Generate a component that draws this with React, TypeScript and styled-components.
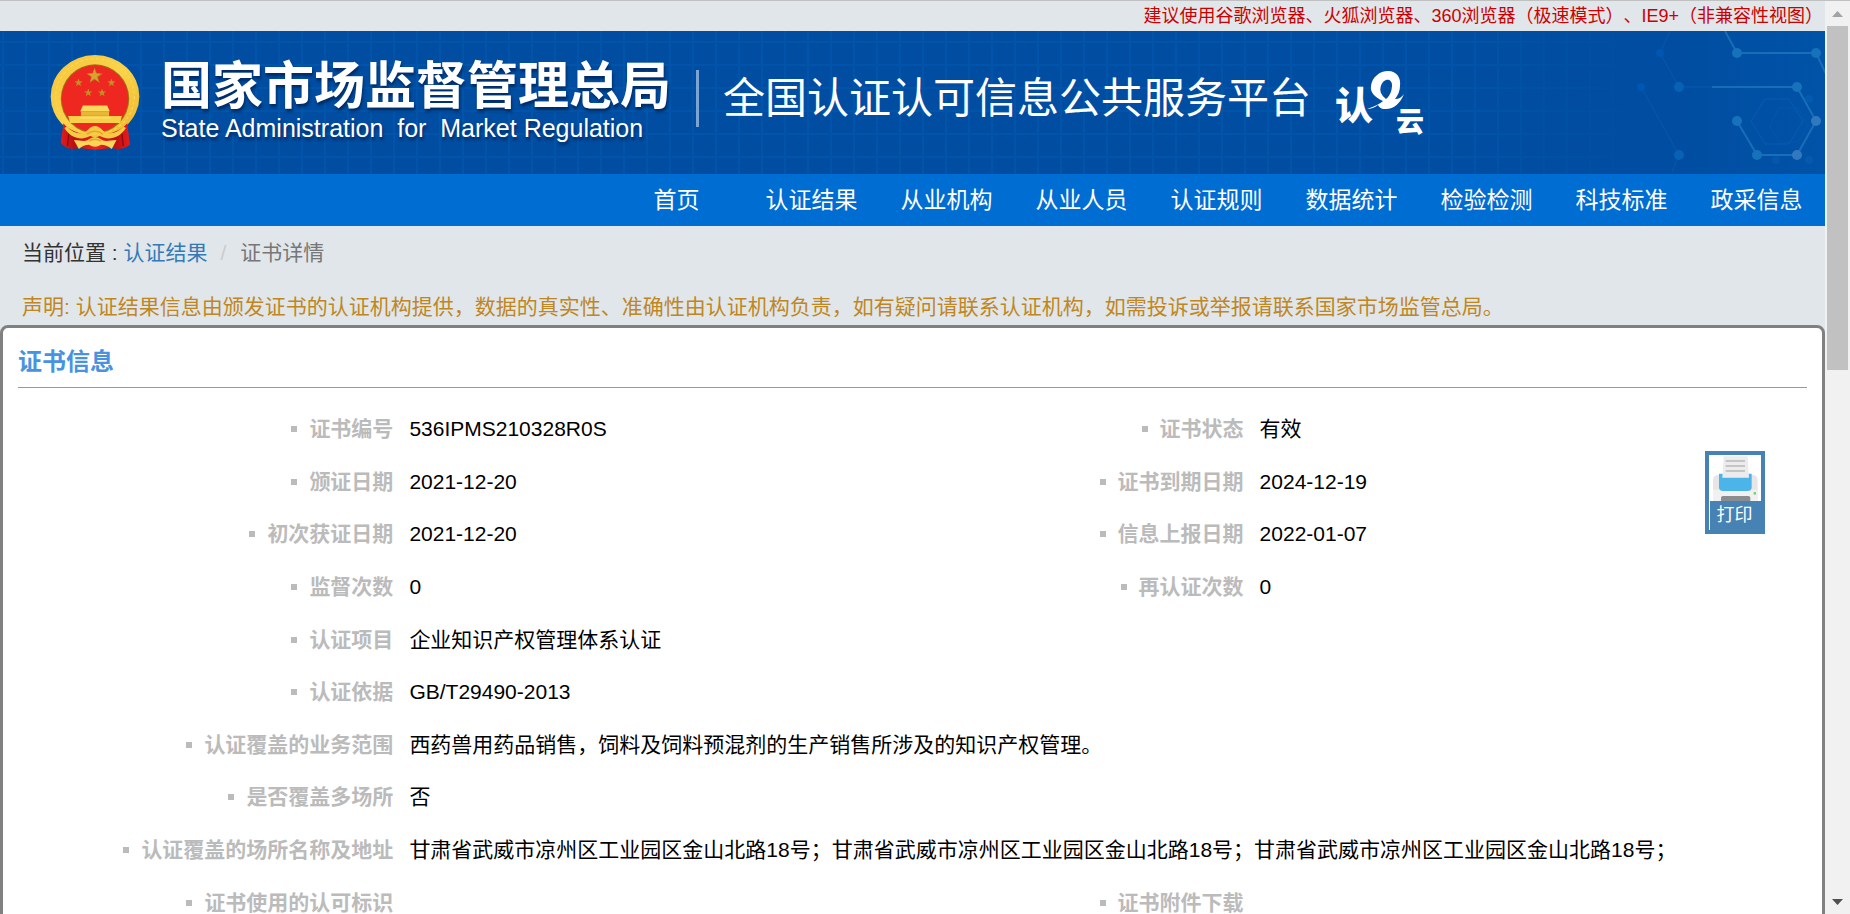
import React from "react";
import styled, { createGlobalStyle } from "styled-components";

const GlobalStyle = createGlobalStyle`
  *, *::before, *::after { box-sizing: border-box; }
  body {
    margin: 0;
    background: #fff;
    color: #333;
    font-family: "Liberation Sans", Arial, "Noto Sans CJK SC", sans-serif;
    font-size: 21px;
    line-height: 30px;
    text-spacing-trim: space-all;
  }
  a { color: inherit; text-decoration: none; }
`;

const Frame = styled.div`
  display: flex;
  height: 100vh;
  overflow: hidden;
  border-top: 1px solid #c0c0c0;
`;

const Page = styled.div`
  flex: 1;
  min-width: 0;
  background: #e1e6ea;
`;

const BrowserNotice = styled.p`
  margin: 0;
  padding-right: 2px;
  color: #cc0000;
  font-size: 18px;
  line-height: 30px;
  text-align: right;
`;

const Banner = styled.header`
  position: relative;
  display: flex;
  align-items: center;
  height: 143px;
  padding-left: 50px;
  white-space: nowrap;
  color: #fff;
  background:
    repeating-linear-gradient(to right, transparent 0 2px, #0055aa 2px 4px, transparent 4px 23px),
    repeating-linear-gradient(to bottom, transparent 0 10px, #0055aa 10px 12px, transparent 12px 23px),
    #004da1;
`;

const Molecules = styled.svg`
  position: absolute;
  top: 0;
  right: 0;
`;

const Emblem = styled.svg`
  flex: none;
  width: 90px;
  height: 95px;
`;

const Agency = styled.div`
  width: 514px;
  margin-left: 21px;
  text-shadow: 1px 3px 3px rgba(0, 20, 60, 0.6);
`;

const AgencyName = styled.div`
  font-size: 51px;
  font-weight: 700;
  line-height: 50px;
`;

const AgencyEnglish = styled.div`
  font-size: 25px;
  line-height: 32px;
  white-space: pre;
`;

const Divider = styled.span`
  width: 3px;
  height: 57px;
  margin: 0 24px 8px 21px;
  background: #7ba4d2;
`;

const PlatformName = styled.h1`
  margin: 0 24px 8px 0;
  font-size: 42px;
  font-weight: 400;
  line-height: 56px;
`;

const CloudMark = styled.svg`
  position: relative;
  flex: none;
  overflow: visible;
  font-family: "Noto Sans CJK SC", sans-serif;
  font-weight: 900;
  fill: #fff;
`;

const NavBar = styled.nav`
  display: flex;
  justify-content: flex-end;
  height: 52px;
  padding-right: 1px;
  background: #006dd2;
`;

const NavLink = styled.a`
  width: 135px;
  color: #fff;
  font-size: 23px;
  line-height: 52px;
  text-align: center;
`;

const Breadcrumb = styled.ol`
  display: flex;
  margin: 0;
  padding: 12px 22px;
  list-style: none;
`;

const Crumb = styled.li<{ $current?: boolean }>`
  color: ${(p) => (p.$current ? "#777" : "#333")};
  white-space: pre;

  a { color: #337ab7; }

  ${(p) => p.$current && `&::before { content: "/"; padding: 0 14px 0 13px; color: #ccc; }`}
`;

const Statement = styled.p`
  margin: 0;
  padding: 12px 22px 3px;
  color: #bf8622;
`;

const Panel = styled.section`
  padding: 19px 15px 40px;
  background: #fff;
  border: 3px solid #808080;
  border-radius: 8px;
`;

const PanelTitle = styled.h2`
  margin: 0 0 15px;
  padding-bottom: 10px;
  border-bottom: 1px solid #999;
  color: #4793e2;
  font-size: 24px;
  line-height: 30px;
`;

const PanelBody = styled.div`
  display: flex;
  align-items: flex-start;
`;

const Details = styled.table`
  flex: 1;
  height: 526px;
  table-layout: fixed;
  border-collapse: collapse;
  color: #000;

  .label { width: 23.2%; }
  .value { width: 27.2%; }
`;

const Label = styled.th`
  padding: 0 16px 0 0;
  color: #bbb;
  font-weight: 700;
  text-align: right;
  white-space: nowrap;

  &::before {
    content: "";
    display: inline-block;
    width: 6px;
    height: 6px;
    margin-right: 12px;
    vertical-align: 4px;
    background: #bbb;
  }
`;

const Value = styled.td`
  padding: 0;
`;

const SideTools = styled.div`
  width: 102px;
  padding-top: 48px;
`;

const PrintButton = styled.button`
  display: block;
  width: 60px;
  padding: 0;
  border: 4px solid #4682b4;
  background: #fff;
  font: inherit;
  cursor: pointer;

  svg { display: block; }
`;

const PrintLabel = styled.span`
  display: block;
  margin-left: 1px;
  padding-right: 2px;
  background: #4682b4;
  color: #fff;
  font-size: 18px;
  line-height: 29px;
`;

const ScrollRail = styled.div`
  display: flex;
  flex-direction: column;
  width: 25px;
  padding: 0 2px;
  background: #f1f1f1;
`;

const ScrollThumb = styled.div`
  height: 344px;
  margin-bottom: auto;
  background: #c1c1c1;
`;

const ScrollArrow = styled.svg`
  flex: none;
  width: 21px;
  height: 25px;
`;

const navItems = ["首页", "认证结果", "从业机构", "从业人员", "认证规则", "数据统计", "检验检测", "科技标准", "政采信息"];

const address = "甘肃省武威市凉州区工业园区金山北路18号；";

const rows: string[][] = [
  ["证书编号", "536IPMS210328R0S", "证书状态", "有效"],
  ["颁证日期", "2021-12-20", "证书到期日期", "2024-12-19"],
  ["初次获证日期", "2021-12-20", "信息上报日期", "2022-01-07"],
  ["监督次数", "0", "再认证次数", "0"],
  ["认证项目", "企业知识产权管理体系认证"],
  ["认证依据", "GB/T29490-2013"],
  ["认证覆盖的业务范围", "西药兽用药品销售，饲料及饲料预混剂的生产销售所涉及的知识产权管理。"],
  ["是否覆盖多场所", "否"],
  ["认证覆盖的场所名称及地址", address.repeat(3)],
  ["证书使用的认可标识", "", "证书附件下载", ""],
];

const starPoints = (cx: number, cy: number, r: number) =>
  Array.from({ length: 10 }, (_, i) => {
    const radius = i % 2 ? r * 0.4 : r;
    const angle = (Math.PI * i) / 5 - Math.PI / 2;
    return `${(cx + radius * Math.cos(angle)).toFixed(1)},${(cy + radius * Math.sin(angle)).toFixed(1)}`;
  }).join(" ");

const smallStars = [[147, 127], [245, 127], [176, 157], [217, 157]];

function NationalEmblem() {
  return (
    <Emblem viewBox="62 44 268 284" preserveAspectRatio="none" aria-hidden="true">
      <defs>
        <linearGradient id="gold" x1="0" y1="0" x2="1" y2="1">
          <stop offset="0" stopColor="#f6c53c" />
          <stop offset="0.5" stopColor="#f9d348" />
          <stop offset="1" stopColor="#edb52b" />
        </linearGradient>
        <linearGradient id="drape" x1="0" y1="0" x2="1" y2="0">
          <stop offset="0" stopColor="#e41b1b" />
          <stop offset="0.2" stopColor="#b80f12" />
          <stop offset="0.5" stopColor="#ee241f" />
          <stop offset="0.8" stopColor="#c01013" />
          <stop offset="1" stopColor="#e81d1c" />
        </linearGradient>
      </defs>
      <ellipse cx="196" cy="168" rx="132" ry="124" fill="url(#gold)" />
      <ellipse cx="196" cy="175" rx="102" ry="103" fill="#9c7415" />
      <ellipse cx="196" cy="175" rx="99" ry="100" fill="#ee2720" />
      <ellipse cx="196" cy="168" rx="117" ry="113" fill="none" stroke="#fbd75c" strokeWidth="3" strokeDasharray="9 7" />
      <polygon points={starPoints(195, 107, 26)} fill="#b98420" />
      <polygon points={starPoints(194, 106, 20)} fill="#d9a232" />
      {smallStars.map(([x, y]) => (
        <polygon key={`${x}-${y}`} points={starPoints(x, y, 13)} fill="#c48f26" />
      ))}
      <path d="M160 195 H232 L240 212 H152 Z" fill="#fbd95c" />
      <path d="M154 212 H238 V226 H154 Z" fill="#eab637" />
      <path d="M116 226 H276 L271 247 H122 Z" fill="#f9cf47" />
      <path d="M150 232 H242" stroke="#fbe58a" strokeWidth="3" />
      <path d="M102 248 C118 268 145 280 170 280 L196 292 L222 280 C250 280 274 268 292 248 L300 312 C285 324 265 328 248 322 L196 327 L146 322 C128 328 108 324 94 306 Z" fill="url(#drape)" />
      <path d="M112 258 C132 280 158 284 174 268 Q196 245 218 268 C234 284 260 280 281 258 L288 262 C270 292 236 300 214 288 L196 281 L178 288 C156 300 122 292 105 262 Z" fill="#f6ca43" />
      <path d="M133 298 C155 300 170 304 178 296 Q196 284 214 296 C222 304 238 300 260 298 L246 325 C235 315 224 312 214 312 Q196 324 178 312 C168 312 158 315 148 325 Z" fill="#fad556" />
      <path d="M172 281 Q196 262 220 281 M178 302 Q196 290 214 302" fill="none" stroke="#e3a32a" strokeWidth="4" />
      <path d="M118 280 L114 316 M276 280 L280 316" stroke="#8f0b10" strokeWidth="4" />
    </Emblem>
  );
}

function MoleculePattern() {
  return (
    <Molecules width="395" height="143" viewBox="0 31 395 143" aria-hidden="true">
      <defs>
        <linearGradient id="fade" x1="0" x2="1" y1="0" y2="0">
          <stop offset="0" stopColor="#004da1" stopOpacity="0" />
          <stop offset="0.6" stopColor="#004da1" />
          <stop offset="1" stopColor="#0053a8" />
        </linearGradient>
      </defs>
      <rect x="0" y="31" width="395" height="143" fill="url(#fade)" />
      <g fill="none" stroke="#2583c4" strokeWidth="2" opacity="0.6">
        <path d="M295 31 L307 53 H386 L397 76" />
        <path d="M282 87 H367 L386 121 L367 155 H327 L307 121" />
      </g>
      <g fill="none" stroke="#0c66bd" opacity="0.5">
        <path d="M240 31 L230 53 L249 87 H282 M211 87 L249 155 L242 172" />
        <path d="M335 99 H359 L373 121 L359 144 H335 L321 121 Z" />
        <path d="M349 108 H368 L378 126 L368 142 H349 L340 126 Z" opacity="0.5" />
      </g>
      <g fill="#1672ba">
        {[[307, 53], [386, 53], [367, 87], [307, 121], [327, 155]].map(([x, y]) => (
          <circle key={`${x}-${y}`} cx={x} cy={y} r="5" />
        ))}
      </g>
      <g fill="#3079be">
        <circle cx="386" cy="121" r="5" />
        <circle cx="367" cy="155" r="5" />
      </g>
      <g fill="#0762b6">
        <circle cx="249" cy="87" r="5" />
        <circle cx="249" cy="155" r="5" />
        <circle cx="230" cy="53" r="4" fill="#0056b2" />
        <circle cx="211" cy="87" r="4" fill="#0056b2" />
        <circle cx="379" cy="99" r="4" opacity="0.5" />
        <circle cx="346" cy="160" r="4" opacity="0.4" />
        <circle cx="379" cy="160" r="4" opacity="0.5" />
      </g>
    </Molecules>
  );
}

function RenzhengCloud() {
  return (
    <CloudMark width="90" height="66" viewBox="26 12 90 66" aria-label="认e云">
      <text x="26" y="61" fontSize="38">认</text>
      <path
        fillRule="evenodd"
        d="M58 51 C66 48 71 46 74 43 C65 39 61 34 62 28 C63 19 71 13 79 13 C88 13 92 20 91 28 C91 33 89 37 86 41 C90 41 93 39 95 36 C91 46 84 52 75 51 C72 51 70 49 69 47 Q64 51 58 51 Z M77 41 C82 37 83 31 83 27 C83 23 80 21 77 22 C73 23 70 30 72 35 Q73 38 77 41 Z"
      />
      <text x="87" y="74" fontSize="28">云</text>
    </CloudMark>
  );
}

function PrinterPicture() {
  return (
    <svg width="52" height="46" viewBox="0 0 156 138" aria-hidden="true">
      <path d="M12 72 Q14 60 30 60 H130 Q144 60 146 74 V138 H12 Z" fill="#e6e6e6" />
      <path d="M12 104 H146 V138 H12 Z" fill="#f1f1f1" />
      <path d="M30 56 H128 V96 Q128 108 116 108 H42 Q30 108 30 96 Z" fill="#4db4ea" />
      <path d="M44 4 H116 L120 68 H40 Z" fill="#ececec" />
      <path d="M50 18 H108 M50 33 H108 M50 48 H108" stroke="#c5c5c5" strokeWidth="6" />
      <path d="M36 138 V128 Q36 123 42 123 H118 Q124 123 124 128 V138 Z" fill="#898d90" />
      <rect x="134" y="111" width="7" height="8" fill="#75d475" />
    </svg>
  );
}

export default function App() {
  return (
    <>
      <GlobalStyle />
      <Frame>
        <Page>
          <BrowserNotice>建议使用谷歌浏览器、火狐浏览器、360浏览器（极速模式）、IE9+（非兼容性视图）</BrowserNotice>
          <Banner>
            <MoleculePattern />
            <NationalEmblem />
            <Agency>
              <AgencyName>国家市场监督管理总局</AgencyName>
              <AgencyEnglish>State Administration  for  Market Regulation</AgencyEnglish>
            </Agency>
            <Divider />
            <PlatformName>全国认证认可信息公共服务平台</PlatformName>
            <RenzhengCloud />
          </Banner>
          <NavBar>
            {navItems.map((item) => (
              <NavLink key={item} href="#">{item}</NavLink>
            ))}
          </NavBar>
          <Breadcrumb>
            <Crumb>当前位置 : <a href="#">认证结果</a></Crumb>
            <Crumb $current>证书详情</Crumb>
          </Breadcrumb>
          <Statement>
            声明: 认证结果信息由颁发证书的认证机构提供，数据的真实性、准确性由认证机构负责，如有疑问请联系认证机构，如需投诉或举报请联系国家市场监管总局。
          </Statement>
          <Panel>
            <PanelTitle>证书信息</PanelTitle>
            <PanelBody>
              <Details>
                <colgroup>
                  <col className="label" />
                  <col className="value" />
                  <col className="label" />
                  <col />
                </colgroup>
                <tbody>
                  {rows.map(([label, value, label2, value2]) => (
                    <tr key={label}>
                      <Label scope="row">{label}</Label>
                      <Value colSpan={label2 ? 1 : 3}>{value}</Value>
                      {label2 && <Label scope="row">{label2}</Label>}
                      {label2 && <Value>{value2}</Value>}
                    </tr>
                  ))}
                </tbody>
              </Details>
              <SideTools>
                <PrintButton type="button">
                  <PrinterPicture />
                  <PrintLabel>打印</PrintLabel>
                </PrintButton>
              </SideTools>
            </PanelBody>
          </Panel>
        </Page>
        <ScrollRail aria-hidden="true">
          <ScrollArrow viewBox="0 0 21 25"><path d="M5 16 L10.500 10 L16 16 Z" fill="#a3a3a3" /></ScrollArrow>
          <ScrollThumb />
          <ScrollArrow viewBox="0 0 21 25"><path d="M5 10 L10.500 16 L16 10 Z" fill="#505050" /></ScrollArrow>
        </ScrollRail>
      </Frame>
    </>
  );
}
